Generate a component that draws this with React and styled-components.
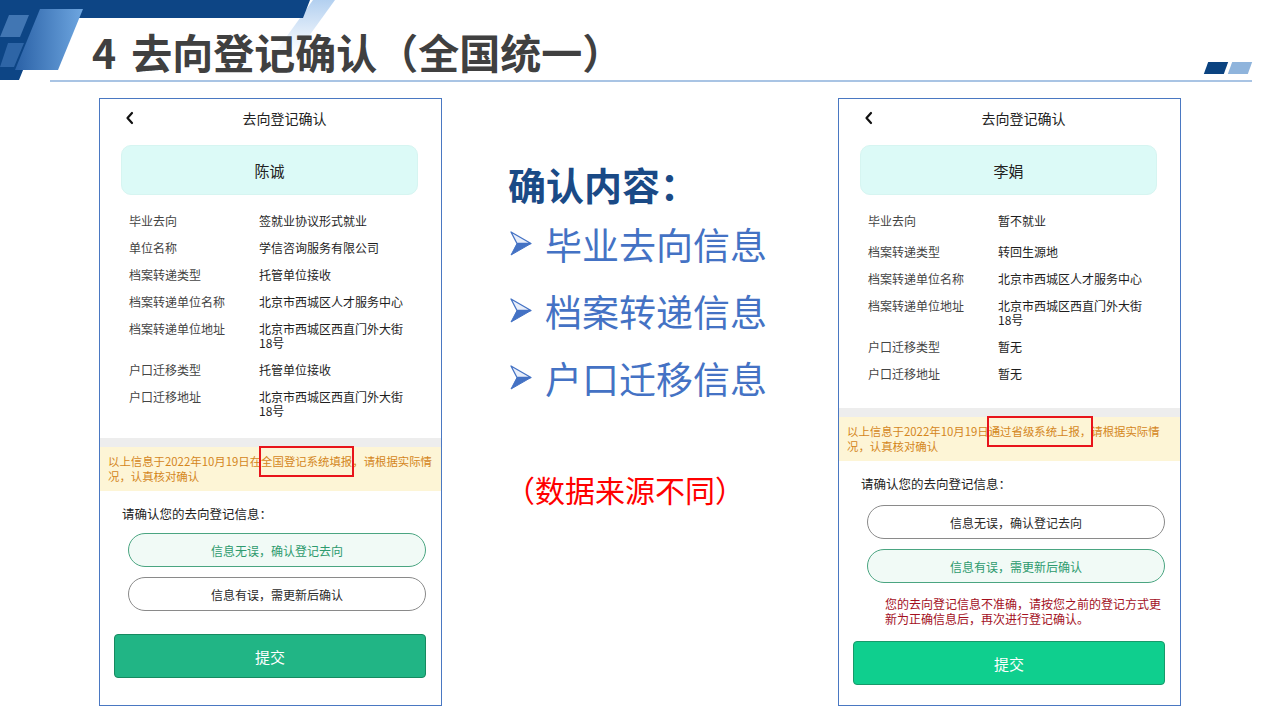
import React from "react";
import styled, { createGlobalStyle } from "styled-components";

const GlobalStyle = createGlobalStyle`
  html, body { margin: 0; padding: 0; background: #fff; }
  body { font-family: "Noto Sans CJK SC", "Noto Sans", sans-serif; }
  * { box-sizing: border-box; }
`;

const Slide = styled.div`
  position: relative;
  width: 1280px;
  height: 720px;
  overflow: hidden;
  background: #fff;
`;

const Decor = styled.svg`
  position: absolute;
  left: 0;
  top: 0;
`;

const Header = styled.header`
  position: relative;
  height: 82px;
  margin: 0 28px 0 50px;
  border-bottom: 2px solid #a9c4e4;
  display: flex;
  justify-content: space-between;
  padding-left: 42px;
`;

const Title = styled.h1`
  margin: 26px 0 0;
  font-size: 41px;
  line-height: 50px;
  font-weight: 700;
  color: #404040;
  letter-spacing: 0;
`;

const TitleNum = styled.span`
  margin-right: 15px;
`;

const Marks = styled.div`
  align-self: flex-end;
  display: flex;
  gap: 4px;
  margin: 0 2px 6px 0;
`;

const Mark = styled.div`
  width: 20px;
  height: 12px;
  transform: skewX(-20deg);
  background: ${(p) => p.$color};
`;

const Main = styled.main`
  display: flex;
  align-items: flex-start;
  padding: 16px 0 0 99px;
`;

const Phone = styled.section`
  width: 343px;
  height: 608px;
  border: 1px solid #4a78c2;
  display: flex;
  flex-direction: column;
  background: #fff;
`;

const PhoneHeader = styled.div`
  height: 38px;
  display: flex;
  align-items: center;
  padding: 0 6px 0 25px;
`;

const PhoneTitle = styled.div`
  flex: 1;
  text-align: center;
  font-size: 14px;
  color: #222;
`;

const NameCard = styled.div`
  margin: 8px 23px 0 21px;
  height: 50px;
  border-radius: 10px;
  background: #dcfaf7;
  border: 1px solid #d6f5f1;
  display: flex;
  align-items: center;
  justify-content: center;
  font-size: 15px;
  color: #222;
`;

const InfoList = styled.div`
  padding: 19px 0 ${(p) => p.$pb}px 29px;
  display: flex;
  flex-direction: column;
  gap: 13px;
`;

const InfoRow = styled.div`
  display: grid;
  grid-template-columns: 130px 150px;
  font-size: 12px;
  line-height: 14px;
  margin-top: ${(p) => p.$extra || 0}px;
`;

const Label = styled.span`
  color: #444;
`;

const Value = styled.span`
  color: #1e1e1e;
`;

const GrayBand = styled.div`
  height: 9px;
  background: #ededed;
`;

const Notice = styled.div`
  background: #fdf5d6;
  padding: 7px 2px 7px 8px;
  font-size: 11.4px;
  line-height: 15px;
  color: #d4861c;
`;

const NoticeLine = styled.div`
  white-space: nowrap;
`;

const Boxed = styled.span`
  position: relative;
  &::after {
    content: "";
    position: absolute;
    left: -2px;
    right: -2px;
    top: -7px;
    bottom: -8px;
    border: 2px solid #e8141b;
  }
`;

const ConfirmTitle = styled.div`
  margin: 15px 0 0 22px;
  font-size: 12.5px;
  line-height: 16px;
  color: #222;
`;

const Choices = styled.div`
  margin: ${(p) => p.$mt}px 15px 0 28px;
  display: flex;
  flex-direction: column;
  gap: 10px;
`;

const Choice = styled.div`
  height: 34px;
  border-radius: 17px;
  border: 1px solid ${(p) => (p.$selected ? "#4aa581" : "#8a8a8a")};
  background: ${(p) => (p.$selected ? "#f1faf6" : "#fff")};
  color: ${(p) => (p.$selected ? "#2e9a6e" : "#2a2a2a")};
  font-size: 12px;
  display: flex;
  align-items: center;
  justify-content: center;
`;

const ErrorText = styled.p`
  margin: 13px 14px 0 46px;
  font-size: 12px;
  line-height: 15px;
  color: #a3101e;
`;

const Submit = styled.div`
  margin: ${(p) => p.$mt}px 15px 0 14px;
  height: 44px;
  border-radius: 4px;
  background: ${(p) => p.$bg};
  border: 1px solid ${(p) => p.$border};
  color: #fff;
  font-size: 15px;
  display: flex;
  align-items: center;
  justify-content: center;
`;

const Center = styled.div`
  width: 396px;
  padding: 64px 0 0 66px;
  display: flex;
  flex-direction: column;
`;

const CenterTitle = styled.div`
  font-size: 38px;
  line-height: 44px;
  font-weight: 700;
  color: #1a4a86;
`;

const Bullets = styled.ul`
  list-style: none;
  margin: 4px 0 0;
  padding: 0;
`;

const Bullet = styled.li`
  display: flex;
  align-items: center;
  gap: 13px;
  height: 67px;
  padding-left: 2px;
  font-size: 37px;
  color: #4472c4;
`;

const SourceNote = styled.div`
  margin-top: 58px;
  margin-left: -3px;
  font-size: 30px;
  line-height: 40px;
  color: #ff0000;
`;

function Chevron() {
  return (
    <svg width="9" height="14" viewBox="0 0 9 14">
      <path d="M7 2 L2.5 7 L7 12" fill="none" stroke="#111" strokeWidth="2.2" strokeLinecap="round" strokeLinejoin="round" />
    </svg>
  );
}

function Arrow() {
  return (
    <svg width="22" height="25" viewBox="0 0 22 25">
      <polygon points="1,1 21,12.5 7,12.5" fill="#e8eefa" stroke="#4472c4" strokeWidth="1.3" strokeLinejoin="round" />
      <polygon points="7,12.5 21,12.5 1,24" fill="#4472c4" stroke="#4472c4" strokeWidth="1" strokeLinejoin="round" />
    </svg>
  );
}

function HeaderDecor() {
  return (
    <Decor width="345" height="85" viewBox="0 0 345 85">
      <defs>
        <linearGradient id="gBig" x1="0" y1="0" x2="1" y2="0">
          <stop offset="0" stopColor="#2a61a6" />
          <stop offset="1" stopColor="#6ea6e0" />
        </linearGradient>
        <linearGradient id="gStripe" x1="0" y1="0" x2="0" y2="1">
          <stop offset="0" stopColor="#b3d0f0" />
          <stop offset="1" stopColor="#b3d0f0" stopOpacity="0" />
        </linearGradient>
      </defs>
      <polygon points="313,0 335,0 296,54 274,54" fill="url(#gStripe)" />
      <polygon points="0,0 310,0 303,18 44,18 19,80 0,80" fill="#0d4585" />
      <polygon points="40,9 83,9 58,70 15,70" fill="url(#gBig)" />
      <polygon points="9,15 29,15 20,37 0,37" fill="#6d9fd8" opacity="0.55" />
      <polygon points="8,43 24,43 14,67 0,67" fill="#4f86c8" opacity="0.5" />
    </Decor>
  );
}

const leftRows = [
  ["毕业去向", "签就业协议形式就业"],
  ["单位名称", "学信咨询服务有限公司"],
  ["档案转递类型", "托管单位接收"],
  ["档案转递单位名称", "北京市西城区人才服务中心"],
  ["档案转递单位地址", "北京市西城区西直门外大街18号"],
  ["户口迁移类型", "托管单位接收"],
  ["户口迁移地址", "北京市西城区西直门外大街18号"],
];

const rightRows = [
  ["毕业去向", "暂不就业"],
  ["档案转递类型", "转回生源地"],
  ["档案转递单位名称", "北京市西城区人才服务中心"],
  ["档案转递单位地址", "北京市西城区西直门外大街18号"],
  ["户口迁移类型", "暂无"],
  ["户口迁移地址", "暂无"],
];

function Rows({ rows, pb, extraSecond }) {
  return (
    <InfoList $pb={pb}>
      {rows.map(([k, v], i) => (
        <InfoRow key={k} $extra={i === 1 ? extraSecond : 0}>
          <Label>{k}</Label>
          <Value>{v}</Value>
        </InfoRow>
      ))}
    </InfoList>
  );
}

export default function App() {
  return (
    <>
      <GlobalStyle />
      <Slide>
        <HeaderDecor />
        <Header>
          <Title>
            <TitleNum>4</TitleNum>去向登记确认（全国统一）
          </Title>
          <Marks>
            <Mark $color="#0b4380" />
            <Mark $color="#8fb4dc" />
          </Marks>
        </Header>
        <Main>
          <Phone>
            <PhoneHeader>
              <Chevron />
              <PhoneTitle>去向登记确认</PhoneTitle>
            </PhoneHeader>
            <NameCard>陈诚</NameCard>
            <Rows rows={leftRows} pb={20} extraSecond={0} />
            <GrayBand />
            <Notice>
              <NoticeLine>
                以上信息于2022年10月19日在<Boxed>全国登记系统填报</Boxed>，请根据实际情
              </NoticeLine>
              <NoticeLine>况，认真核对确认</NoticeLine>
            </Notice>
            <ConfirmTitle>请确认您的去向登记信息：</ConfirmTitle>
            <Choices $mt={11}>
              <Choice $selected>信息无误，确认登记去向</Choice>
              <Choice>信息有误，需更新后确认</Choice>
            </Choices>
            <Submit $mt={23} $bg="#21b585" $border="#168a60">提交</Submit>
          </Phone>

          <Center>
            <CenterTitle>确认内容：</CenterTitle>
            <Bullets>
              <Bullet><Arrow />毕业去向信息</Bullet>
              <Bullet><Arrow />档案转递信息</Bullet>
              <Bullet><Arrow />户口迁移信息</Bullet>
            </Bullets>
            <SourceNote>（数据来源不同）</SourceNote>
          </Center>

          <Phone>
            <PhoneHeader>
              <Chevron />
              <PhoneTitle>去向登记确认</PhoneTitle>
            </PhoneHeader>
            <NameCard>李娟</NameCard>
            <Rows rows={rightRows} pb={27} extraSecond={4} />
            <GrayBand />
            <Notice>
              <NoticeLine>
                以上信息于2022年10月19日<Boxed>通过省级系统上报，</Boxed>请根据实际情
              </NoticeLine>
              <NoticeLine>况，认真核对确认</NoticeLine>
            </Notice>
            <ConfirmTitle>请确认您的去向登记信息：</ConfirmTitle>
            <Choices $mt={13}>
              <Choice>信息无误，确认登记去向</Choice>
              <Choice $selected>信息有误，需更新后确认</Choice>
            </Choices>
            <ErrorText>您的去向登记信息不准确，请按您之前的登记方式更新为正确信息后，再次进行登记确认。</ErrorText>
            <Submit $mt={15} $bg="#0fcf8e" $border="#179a6a">提交</Submit>
          </Phone>
        </Main>
      </Slide>
    </>
  );
}
